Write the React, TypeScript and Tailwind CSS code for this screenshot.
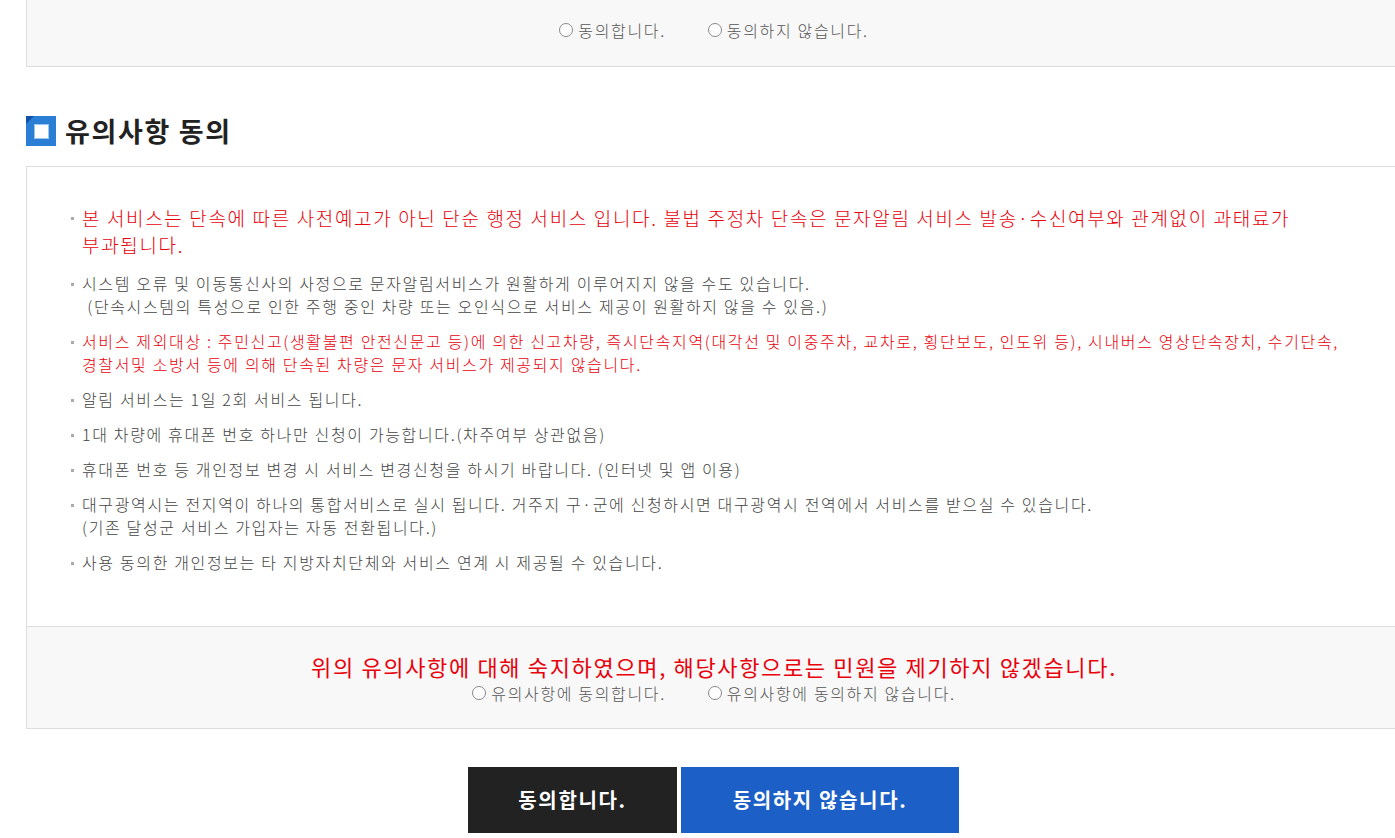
const font = { fontFamily: '"Noto Sans CJK KR", "Noto Sans", sans-serif' };

function Radio({ label }: { label: string }) {
  return (
    <label className="flex items-center gap-[5px]">
      <span className="inline-block h-[14px] w-[14px] rounded-full border border-[#888] bg-white" />
      <span>{label}</span>
    </label>
  );
}

function Item({ children, red, big }: { children: React.ReactNode; red?: boolean; big?: boolean }) {
  return (
    <li
      className={`relative pl-[11px] font-light tracking-[1.65px] ${big ? "mb-[14px] text-[19px] leading-[27px]" : "mb-[12px] text-[16px] leading-[23px]"} ${
        red ? "text-[#e8000b]" : "text-[#444]"
      }`}
    >
      <span
        className={`absolute left-0 h-[3px] w-[3px] bg-[#aaa] ${big ? "top-[13px]" : "top-[11px]"}`}
      />
      {children}
    </li>
  );
}

export default function App() {
  return (
    <div className="w-full overflow-hidden bg-white" style={font}>
      <div className="ml-[26px] w-[1375px]">
        {/* Previous agreement radios */}
        <div className="flex h-[67px] items-start justify-center gap-[42px] border-b border-l border-[#ddd] bg-[#f8f8f8] pt-[18px] text-[16px] font-light leading-[24px] tracking-[1.65px] text-[#555]">
          <Radio label="동의합니다." />
          <Radio label="동의하지 않습니다." />
        </div>

        {/* Heading */}
        <h2 className="mt-[49px] flex items-center gap-[9px] text-[27px] font-bold leading-[30px] tracking-[1.65px] text-[#222]">
          <span className="relative inline-flex h-[30px] w-[30px] items-center justify-center overflow-hidden bg-[#2a7fd4]">
            <span className="absolute left-0 top-0 h-0 w-0 border-r-[8px] border-t-[8px] border-r-transparent border-t-[#1450a8]" />
            <span className="h-[15px] w-[15px] border border-[#9cc7f0] bg-white" />
          </span>
          유의사항 동의
        </h2>

        {/* Notice box */}
        <div className="mt-[20px] border-l border-t border-[#ddd]">
          <ul className="pb-[40px] pl-[44px] pr-[30px] pt-[37px]">
            <Item red big>
              본 서비스는 단속에 따른 사전예고가 아닌 단순 행정 서비스 입니다. 불법 주정차 단속은 문자알림 서비스 발송·수신여부와 관계없이 과태료가
              <br />
              부과됩니다.
            </Item>
            <Item>
              시스템 오류 및 이동통신사의 사정으로 문자알림서비스가 원활하게 이루어지지 않을 수도 있습니다.
              <br />
              &nbsp;(단속시스템의 특성으로 인한 주행 중인 차량 또는 오인식으로 서비스 제공이 원활하지 않을 수 있음.)
            </Item>
            <Item red>
              서비스 제외대상 : 주민신고(생활불편 안전신문고 등)에 의한 신고차량, 즉시단속지역(대각선 및 이중주차, 교차로, 횡단보도, 인도위 등), 시내버스 영상단속장치, 수기단속,
              <br />
              경찰서및 소방서 등에 의해 단속된 차량은 문자 서비스가 제공되지 않습니다.
            </Item>
            <Item>알림 서비스는 1일 2회 서비스 됩니다.</Item>
            <Item>1대 차량에 휴대폰 번호 하나만 신청이 가능합니다.(차주여부 상관없음)</Item>
            <Item>휴대폰 번호 등 개인정보 변경 시 서비스 변경신청을 하시기 바랍니다. (인터넷 및 앱 이용)</Item>
            <Item>
              대구광역시는 전지역이 하나의 통합서비스로 실시 됩니다. 거주지 구·군에 신청하시면 대구광역시 전역에서 서비스를 받으실 수 있습니다.
              <br />
              (기존 달성군 서비스 가입자는 자동 전환됩니다.)
            </Item>
            <Item>사용 동의한 개인정보는 타 지방자치단체와 서비스 연계 시 제공될 수 있습니다.</Item>
          </ul>

          <div className="border-b border-t border-[#ddd] bg-[#f8f8f8] pb-[24px] pt-[23px] text-center">
            <p className="text-[22px] leading-[32px] tracking-[1.65px] text-[#e8000b]">
              위의 유의사항에 대해 숙지하였으며, 해당사항으로는 민원을 제기하지 않겠습니다.
            </p>
            <div className="flex justify-center gap-[42px] text-[16px] font-light leading-[22px] tracking-[1.65px] text-[#555]">
              <Radio label="유의사항에 동의합니다." />
              <Radio label="유의사항에 동의하지 않습니다." />
            </div>
          </div>
        </div>

        {/* Buttons */}
        <div className="mt-[38px] flex justify-center gap-[4px]">
          <button className="h-[66px] w-[209px] bg-[#222] text-[20px] font-bold tracking-[1.65px] text-white">동의합니다.</button>
          <button className="h-[66px] w-[278px] bg-[#1c5fc6] text-[20px] font-bold tracking-[1.65px] text-white">동의하지 않습니다.</button>
        </div>
      </div>
    </div>
  );
}
